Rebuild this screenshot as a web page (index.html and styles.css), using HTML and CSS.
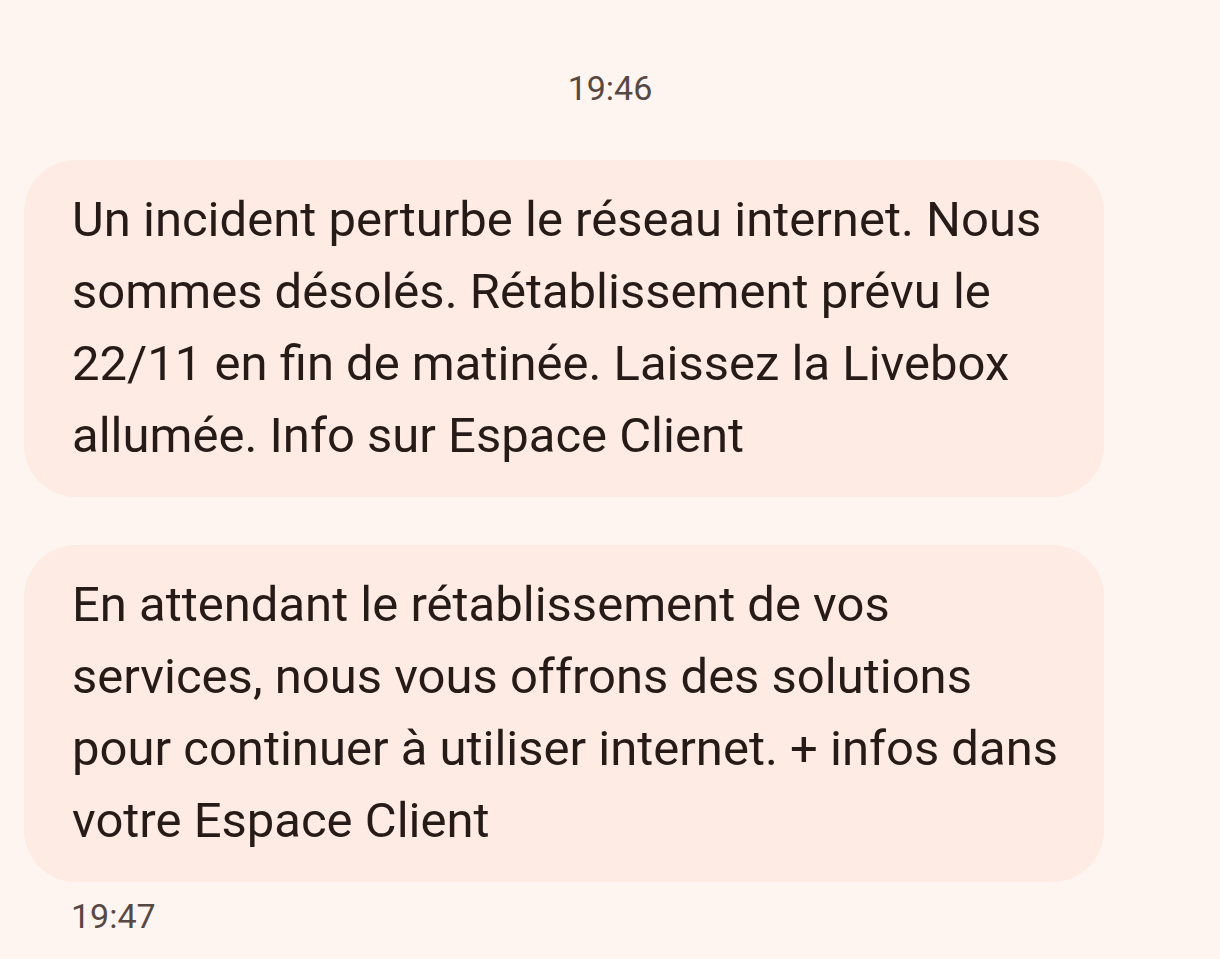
FILE: index.html
```html
<!DOCTYPE html>
<html lang="fr">
<head>
  <meta charset="utf-8" />
  <title>Messages</title>
  <link rel="stylesheet" href="styles.css">
</head>
<body>
  <div class="thread">
    <div class="stamp center">19:46</div>
    <div class="bubble">Un incident perturbe le réseau internet. Nous<br>sommes désolés. Rétablissement prévu le<br>22/11 en fin de matinée. Laissez la Livebox<br>allumée. Info sur Espace Client</div>
    <div class="bubble">En attendant le rétablissement de vos<br>services, nous vous offrons des solutions<br>pour continuer à utiliser internet. + infos dans<br>votre Espace Client</div>
    <div class="stamp">19:47</div>
  </div>
</body>
</html>
```

FILE: styles.css
```css
body {
  margin: 0;
  padding: 0;
  background: #fef5f0;
  color: #271b18;
  font-family: 'Roboto', 'Noto Sans', sans-serif;
}

.thread {
  display: flex;
  flex-direction: column;
  align-items: flex-start;
  padding-top: 64px;
}

.stamp {
  font-size: 34px;
  line-height: 48px;
  color: #574843;
  padding-left: 71px;
}

.stamp.center {
  align-self: stretch;
  text-align: center;
  padding: 0;
  margin-bottom: 48px;
}

.bubble {
  box-sizing: border-box;
  width: 1080px;
  margin-left: 24px;
  background: #fdebe4;
  border-radius: 52px;
  padding: 24px 40px 25px 48px;
  font-size: 49px;
  line-height: 72px;
  margin-bottom: 48px;
  white-space: nowrap;
}

.bubble + .stamp {
  margin-top: -38px;
}
```
